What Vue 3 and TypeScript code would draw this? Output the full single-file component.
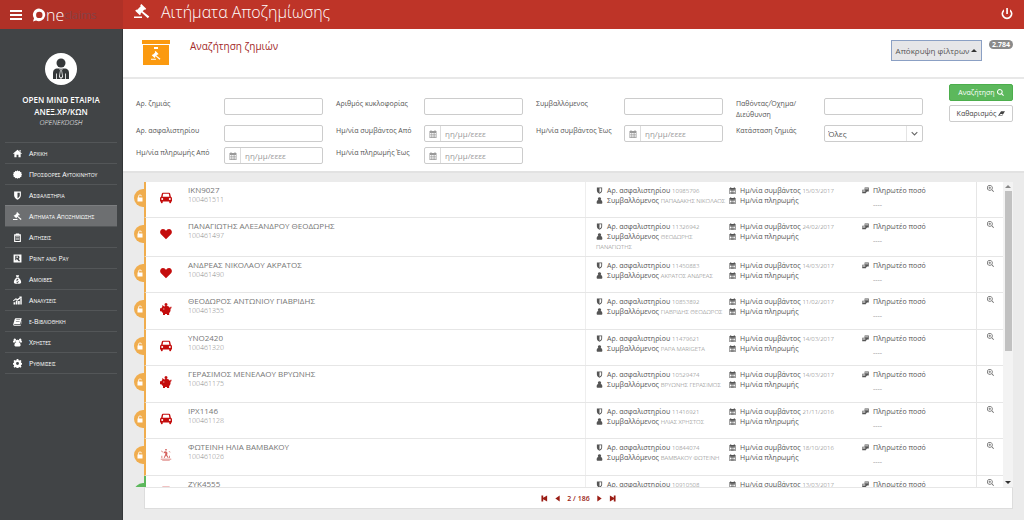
<script setup lang="ts">
import { ref } from 'vue'

interface Glyph { d: string; box: string }
const G: Record<string, Glyph> = {
  home: { box: '0 0 16 16', d: 'M8 1.2 15.8 8l-1 1.1L13.6 8v6.6H9.7v-4.4H6.3v4.4H2.4V8L1.2 9.1.2 8zM11.6 1.6h2v3.6l-2-1.7z' },
  cert: { box: '0 0 16 16', d: 'M8 .6l1.7 1.5 2.2-.6.9 2.1 2.2.6-.1 2.3L16 8l-1.1 1.8.1 2.2-2.2.7-.9 2-2.2-.5L8 15.500l-1.700-1.300-2.200.5-.9-2L1 12l.1-2.200L0 8l1.100-1.500L1 4.200l2.200-.6.9-2.100 2.200.6z' },
  shield: { box: '0 0 16 16', d: 'M2 1h12v7c0 4-4 6.500-6 7.500C6 14.500 2 12 2 8zM8 3v10c2-1.200 4-3 4-5V3z' },
  gavel: { box: '0 0 16 16', d: 'M6.200 1.200 7.400 0l4.800 4.800L11 6l-.6-.5-1.700 1.700 6.600 5.300-1.500 1.700-6.300-5.700-1 1 .5.600-1.200 1.200L1.200 6.700l1.200-1.200.6.5 3.700-3.700zM0 12.500h8V14H0z' },
  clipboard: { box: '0 0 16 16', d: 'M2 2h3V.8h6V2h3v14H2zm2 3v9h8V5zm1 1h6v1.200H5zm0 2.500h6v1.200H5zM5 11h6v1.200H5z' },
  print: { box: '0 0 16 16', d: 'M1 1h14v14H1zm3 2v8h2V8l4 5h2v-2l-2-2.500C12 8 12.500 3 9 3zm2 1.500h3V6.500H6z' },
  bag: { box: '0 0 16 16', d: 'M5 .5h6L9.700 3.500H6.300zM6 4.500h4c2 2 4.500 5 4.500 8 0 2-1 3-3 3h-7c-2 0-3-1-3-3 0-3 2.500-6 4.500-8zm1.400 2v1C5.500 8 5.500 10 7 10.600l2 .6c.5.500 0 1.100-.8 1.100L6 12v1.200l1.400.3v1h1.200v-1c2-.5 2-2.600.2-3.300L7.300 9.600c-.8-.7 0-1.200 2.400-.7V7.800l-1.100-.3v-1z' },
  chart: { box: '0 0 16 16', d: 'M1 11h3v4H1zm4-3h3v7H5zm4 1h3v6H9zm4-4h2.500v10H13zM0 8l5-4 3 1.500L12 2l-1-1h4.500v4.200L14 4 8.500 8 5 6 1 9.500z' },
  book: { box: '0 0 16 16', d: 'M5 2h10.500L12.500 13H2.700c-1 0-1 1 0 1h10.800l2-8 .4 1-2.300 8.500H2.500C.5 15.500 0 14 .7 12L3 4c.4-1.300 1-2 2-2zm1 2.500-.3 1h6.500l.3-1zm-.7 2.500L5 8h6.500l.3-1z' },
  users: { box: '0 0 16 16', d: 'M3 1a2.300 2.300 0 0 1 2 3.600C3.800 6 4.600 7.800 4 7.800H.3C-.5 5 .5 5 1.600 4.800A2.300 2.300 0 0 1 3 1zm10 0a2.300 2.300 0 0 1 1.400 3.800c1 .2 2 .2 1.300 3H12c-.6 0 .2-1.800-1-3.200A2.300 2.300 0 0 1 13 1zM8 3a2.800 2.800 0 0 1 2.300 4.800c2.700.2 3.200 3 3.200 5.200 0 1.300-.8 2-2 2h-7c-1.200 0-2-.7-2-2 0-2.200.5-5 3.200-5.200A2.800 2.800 0 0 1 8 3z' },
  cog: { box: '0 0 16 16', d: 'M6.600 0h2.800l.5 2.200 1.300.6 2-1.200 1.900 1.900-1.200 2 .6 1.300 2.200.4v2.700l-2.200.5-.6 1.300 1.200 2-1.900 1.900-2-1.200-1.300.5-.5 2.200H6.600L6.100 15l-1.300-.6-2 1.200-1.900-1.900 1.200-2-.6-1.300L-.5 9.900V7.200l2-.4.600-1.300-1.200-2 1.900-1.900 2 1.200 1.300-.6zM8 5.500a2.600 2.600 0 1 0 0 5.200 2.600 2.600 0 0 0 0-5.200z' },
  car: { box: '0 0 18 16', d: 'M4.500 0h9c1 0 1.500.6 1.800 1.500l1 4.500c1.200.4 1.700 1.400 1.700 2.700v4.500h-1.300v1.300c0 2-2.800 2-2.800 0v-1.300H4.100v1.300c0 2-2.800 2-2.800 0v-1.300H0V8.700C0 7.400.5 6.400 1.700 6l1-4.500C3 .6 3.500 0 4.500 0zm.3 1.800L3.900 6h10.200l-.9-4.200zM3.300 8a1.500 1.500 0 1 0 0 3 1.500 1.500 0 0 0 0-3zm11.400 0a1.500 1.500 0 1 0 0 3 1.500 1.500 0 0 0 0-3z' },
  heart: { box: '0 0 16 16', d: 'M8 15 1.300 8.300C-1 5.500.3 1.300 4 1.200c2 0 3 1.200 4 2.400 1-1.200 2-2.400 4-2.400 3.700.1 5 4.300 2.700 7.100z' },
  pig: { box: '0 0 16 16', d: 'M8 0a2 2 0 1 1 0 4 2 2 0 0 1 0-4zM3 2.500l2.700 2C8 3.800 11.500 4 13 6.200c.7.200 1-.3.700-1l1.200-.5c.9 1.400.4 2.600-1 2.900.7 2.200-.3 4.400-1.700 5.600V16H9.300v-1.500H6.700V16H4v-2.600c-1-.6-1.700-1.400-2.100-2.400H0V7h1.800c.3-.7.700-1.200 1.200-1.600zM4.500 7.200v1.300h1.200V7.200z' },
  accident: { box: '0 0 16 16', d: 'M7 0h2v2H7zM5 3.500 8 3l2 2-.5 3 2 3.500-1 .5L8 8.500 6 12l-1-.5L7 7V5L5 6zM2 2l2 2-.5.500-2-2zM12 3l2 1-.4.700-2-1zM1 13h14v1H1zm2 2h10v.8H3zM12 9h1v3h-1zM2 9h1v3H2z' },
  lock: { box: '0 0 16 16', d: 'M4.500 7V4.500a3.500 3.500 0 0 1 7 0h-1.700c0-2.400-3.600-2.400-3.600 0V7H13v8H3V7z' },
  user: { box: '0 0 16 16', d: 'M8 .5A3.700 3.700 0 0 1 10.500 7c3.500.2 4 3.500 4 6 0 1.500-1 2.500-2.500 2.500H4C2.500 15.500 1.500 14.500 1.500 13c0-2.500.5-5.800 4-6A3.700 3.700 0 0 1 8 .5z' },
  calendar: { box: '0 0 16 16', d: 'M1 2h2V.5h2V2h6V.5h2V2h2v14H1zm1.200 4v2.200h2.500V6zm3.500 0v2.200h2V6zm3 0v2.200h2V6zm3 0v2.200h2V6zM2.200 9.200v2.200h2.500V9.200zm3.500 0v2.200h2V9.200zm3 0v2.200h2V9.200zm3 0v2.200h2V9.200zM2.200 12.400v2.200h2.500v-2.200zm3.500 0v2.200h2v-2.200zm3 0v2.200h2v-2.200zm3 0v2.200h2v-2.200z' },
  money: { box: '0 0 16 16', d: 'M6 1h9.500v9.500H11v1.700H9V14H.5V6H6zM7 3v1h7V3zm0 2.500v1h7v-1zM1.500 8v1h6V8zm0 2.500v1h6v-1z' },
  zoom: { box: '0 0 16 16', d: 'M6.500 0a6.500 6.500 0 0 1 5.200 10.300l4.300 4.300-1.400 1.400-4.300-4.300A6.500 6.500 0 1 1 6.500 0zm0 1.500a5 5 0 1 0 0 10 5 5 0 0 0 0-10zM5.800 3.500h1.400v2.300h2.300v1.400H7.200v2.300H5.800V7.200H3.500V5.800h2.300z' },
  search: { box: '0 0 16 16', d: 'M6.500 0a6.500 6.500 0 0 1 5.400 10.100l4 4-1.800 1.800-4-4A6.500 6.500 0 1 1 6.500 0zm0 2.300a4.200 4.200 0 1 0 0 8.400 4.200 4.200 0 0 0 0-8.400z' },
  eraser: { box: '0 0 16 16', d: 'M7 3h9l-6.500 10H0zm-1 6-3 3h6l2-3z' },
  power: { box: '0 0 16 16', d: 'M7 0h2.200v8H7zM4 1.500v3a5 5 0 1 0 8 0v-3a7.300 7.300 0 1 1-8 0z' },
  first: { box: '0 0 16 16', d: 'M1 1h4v5.500L14 1v14L5 9.500V15H1z' },
  prev: { box: '0 0 16 16', d: 'M13 1v14L3 8z' },
  next: { box: '0 0 16 16', d: 'M3 1v14l10-7z' },
  last: { box: '0 0 16 16', d: 'M15 1h-4v5.500L2 1v14l9-5.500V15h4z' },
}

const menu = [
  { icon: 'home', text: 'Αρχικη' },
  { icon: 'cert', text: 'Προσφορες Αυτοκινητου' },
  { icon: 'shield', text: 'Ασφαλιστηρια' },
  { icon: 'gavel', text: 'Αιτηματα Αποζημιωσης', active: true },
  { icon: 'clipboard', text: 'Αιτησεις' },
  { icon: 'print', text: 'Print and Pay' },
  { icon: 'bag', text: 'Αμοιβες' },
  { icon: 'chart', text: 'Αναλυσεις' },
  { icon: 'book', text: 'e-Βιβλιοθηκη' },
  { icon: 'users', text: 'Χρηστες' },
  { icon: 'cog', text: 'Ρυθμισεις' },
]

const fields = [
  { id: 'claim', label: 'Αρ. ζημιάς', kind: 'text' },
  { id: 'plate', label: 'Αριθμός κυκλοφορίας', kind: 'text' },
  { id: 'holder', label: 'Συμβαλλόμενος', kind: 'text' },
  { id: 'victim', label: 'Παθόντας/Όχημα/ Διεύθυνση', kind: 'text' },
  { id: 'policy', label: 'Αρ. ασφαλιστηρίου', kind: 'text' },
  { id: 'evfrom', label: 'Ημ/νία συμβάντος Από', kind: 'date' },
  { id: 'evto', label: 'Ημ/νία συμβάντος Έως', kind: 'date' },
  { id: 'status', label: 'Κατάσταση ζημιάς', kind: 'select' },
  { id: 'payfrom', label: 'Ημ/νία πληρωμής Από', kind: 'date' },
  { id: 'payto', label: 'Ημ/νία πληρωμής Έως', kind: 'date' },
]

const claims = [
  { icon: 'car', name: 'ΙΚΝ9027', no: '100461511', policy: '10985796', holder: 'ΠΑΠΑΔΑΚΗΣ ΝΙΚΟΛΑΟΣ', date: '15/03/2017' },
  { icon: 'heart', name: 'ΠΑΝΑΓΙΩΤΗΣ ΑΛΕΞΑΝΔΡΟΥ ΘΕΟΔΩΡΗΣ', no: '100461497', policy: '11326942', holder: 'ΘΕΟΔΩΡΗΣ\nΠΑΝΑΓΙΩΤΗΣ', date: '24/02/2017' },
  { icon: 'heart', name: 'ΑΝΔΡΕΑΣ ΝΙΚΟΛΑΟΥ ΑΚΡΑΤΟΣ', no: '100461490', policy: '11450883', holder: 'ΑΚΡΑΤΟΣ ΑΝΔΡΕΑΣ', date: '14/03/2017' },
  { icon: 'pig', name: 'ΘΕΟΔΩΡΟΣ ΑΝΤΩΝΙΟΥ ΓΙΑΒΡΙΔΗΣ', no: '100461355', policy: '10853892', holder: 'ΓΙΑΒΡΙΔΗΣ ΘΕΟΔΩΡΟΣ', date: '11/02/2017' },
  { icon: 'car', name: 'ΥΝΟ2420', no: '100461320', policy: '11479621', holder: 'PAPA MARIGETA', date: '14/03/2017' },
  { icon: 'pig', name: 'ΓΕΡΑΣΙΜΟΣ ΜΕΝΕΛΑΟΥ ΒΡΥΩΝΗΣ', no: '100461175', policy: '10529474', holder: 'ΒΡΥΩΝΗΣ ΓΕΡΑΣΙΜΟΣ', date: '14/03/2017' },
  { icon: 'car', name: 'ΙΡΧ1146', no: '100461128', policy: '11416921', holder: 'ΗΛΙΑΣ ΧΡΗΣΤΟΣ', date: '21/11/2016' },
  { icon: 'accident', name: 'ΦΩΤΕΙΝΗ ΗΛΙΑ ΒΑΜΒΑΚΟΥ', no: '100461026', policy: '10844074', holder: 'ΒΑΜΒΑΚΟΥ ΦΩΤΕΙΝΗ', date: '18/10/2016' },
  { icon: 'car', name: 'ΖΥΚ4555', no: '', policy: '10910508', holder: '', date: '13/03/2017', open: true },
]

const values = ref<Record<string, string>>({})
const status = ref('all')
</script>

<template>
  <div class="page">
    <aside class="side">
      <div class="brand">
        <button class="plain burger" aria-label="Μενού"><span /><span /><span /></button>
        <a class="logo" href="#">
          <svg class="mark" viewBox="0 0 14 14"><path d="M7 .5a6.300 6.300 0 1 1-3 11.900L1 13.500l1-3.200A6.300 6.300 0 0 1 7 .5zm.3 3.200a3.200 3.200 0 1 0 0 6.400 3.200 3.200 0 0 0 0-6.400z" fill-rule="evenodd" /></svg>
          <span class="one">ne</span><span class="sub">claims</span>
        </a>
      </div>
      <div class="profile">
        <svg class="avatar" viewBox="0 0 32 32">
          <circle cx="16" cy="16" r="16" fill="#fff" />
          <circle cx="16" cy="10" r="4.500" fill="#35383a" />
          <path d="M13 15.500h6c4 0 5 2 5 5V26H8v-5.500c0-3 1-5 5-5z" fill="#35383a" />
          <path d="M14.300 15.500h3.400l-.7 2 1 6.500-2 2-2-2 1-6.500zM11 20.500h.8V26H11zm9.200 0h.8V26h-.8z" fill="#fff" />
          <path d="M15.300 16h1.400l-.3 1.600.7 6-1.100 1.200-1.100-1.200.7-6z" fill="#35383a" />
        </svg>
        <strong>OPEN MIND ΕΤΑΙΡΙΑ ΑΝΕΞ.ΧΡ/ΚΩΝ</strong>
        <em>OPENEKDOSH</em>
      </div>
      <nav>
        <a v-for="m in menu" :key="m.text" href="#" :class="{ active: m.active }">
          <svg :viewBox="G[m.icon].box"><path :d="G[m.icon].d" fill-rule="evenodd" /></svg>
          <span>{{ m.text }}</span>
        </a>
      </nav>
    </aside>

    <div class="main">
      <header class="top">
        <svg class="gavel" :viewBox="G.gavel.box"><path :d="G.gavel.d" /></svg>
        <h1>Αιτήματα Αποζημίωσης</h1>
        <button class="plain power" aria-label="Έξοδος"><svg :viewBox="G.power.box"><path :d="G.power.d" /></svg></button>
      </header>

      <section class="heading">
        <svg class="box" viewBox="0 0 28 26">
          <path d="M0 0h28v4H0zM1 5h26v20H1z" fill="#fb9a10" />
          <path d="M12 7h4v2h-4z" fill="#fff" />
          <g transform="translate(9 11) scale(.62)" fill="#fff"><path :d="G.gavel.d" /></g>
        </svg>
        <h2>Αναζήτηση ζημιών</h2>
        <button class="toggle">Απόκρυψη φίλτρων <i /></button>
        <span class="badge">2.784</span>
      </section>

      <form class="filters" @submit.prevent>
        <div class="grid">
          <div v-for="f in fields" :key="f.id" class="field">
            <label :for="f.id">{{ f.label }}</label>
            <div v-if="f.kind === 'date'" class="control">
              <span class="addon"><svg :viewBox="G.calendar.box"><path :d="G.calendar.d" fill-rule="evenodd" /></svg></span>
              <input :id="f.id" v-model="values[f.id]" type="text" placeholder="ηη/μμ/εεεε">
            </div>
            <div v-else-if="f.kind === 'select'" class="control">
              <select :id="f.id" v-model="status"><option value="all">Όλες</option></select>
              <span class="chevron"><svg viewBox="0 0 10 6"><path d="M1 1l4 4 4-4" fill="none" stroke="#666" stroke-width="1.500" /></svg></span>
            </div>
            <div v-else class="control"><input :id="f.id" v-model="values[f.id]" type="text"></div>
          </div>
        </div>
        <div class="actions">
          <button class="go" type="submit">Αναζήτηση <svg :viewBox="G.search.box"><path :d="G.search.d" fill-rule="evenodd" /></svg></button>
          <button class="clear" type="reset">Καθαρισμός <svg :viewBox="G.eraser.box"><path :d="G.eraser.d" fill-rule="evenodd" /></svg></button>
        </div>
      </form>

      <section class="results">
        <div class="viewport">
          <ul class="list">
            <li v-for="c in claims" :key="c.policy">
              <span class="tab" :class="{ open: c.open }"><svg :viewBox="G.lock.box"><path :d="G.lock.d" /></svg></span>
              <div class="row" :class="{ open: c.open }">
                <svg class="kind" :class="c.icon" :viewBox="G[c.icon].box"><path :d="G[c.icon].d" fill-rule="evenodd" /></svg>
                <div class="who"><b>{{ c.name }}</b><small v-if="c.no">{{ c.no }}</small></div>
                <div class="info policy">
                  <p><svg :viewBox="G.shield.box"><path :d="G.shield.d" fill-rule="evenodd" /></svg>Αρ. ασφαλιστηρίου <span>{{ c.policy }}</span></p>
                  <p v-if="c.holder"><svg :viewBox="G.user.box"><path :d="G.user.d" /></svg>Συμβαλλόμενος <span>{{ c.holder }}</span></p>
                </div>
                <div class="info dates">
                  <p><svg :viewBox="G.calendar.box"><path :d="G.calendar.d" fill-rule="evenodd" /></svg>Ημ/νία συμβάντος <span>{{ c.date }}</span></p>
                  <p v-if="c.holder"><svg :viewBox="G.calendar.box"><path :d="G.calendar.d" fill-rule="evenodd" /></svg>Ημ/νία πληρωμής</p>
                </div>
                <div class="info amount">
                  <p><svg :viewBox="G.money.box"><path :d="G.money.d" fill-rule="evenodd" /></svg>Πληρωτέο ποσό</p>
                  <p v-if="c.holder" class="dash">----</p>
                </div>
                <button class="plain view" aria-label="Προβολή"><svg :viewBox="G.zoom.box"><path :d="G.zoom.d" fill-rule="evenodd" /></svg></button>
              </div>
            </li>
          </ul>
          <div class="bar"><i class="up" /><div class="track"><div class="thumb" /></div><i class="down" /></div>
        </div>
        <footer class="pager">
          <button class="plain" aria-label="Πρώτη"><svg :viewBox="G.first.box"><path :d="G.first.d" /></svg></button>
          <button class="plain" aria-label="Προηγούμενη"><svg :viewBox="G.prev.box"><path :d="G.prev.d" /></svg></button>
          <span>2 / 186</span>
          <button class="plain" aria-label="Επόμενη"><svg :viewBox="G.next.box"><path :d="G.next.d" /></svg></button>
          <button class="plain" aria-label="Τελευταία"><svg :viewBox="G.last.box"><path :d="G.last.d" /></svg></button>
        </footer>
      </section>
    </div>
  </div>
</template>

<style>
body { margin: 0; }
</style>

<style scoped>
* { box-sizing: border-box; }
.page { display: flex; height: 100vh; background: #ebebeb; font-family: "Open Sans", "Noto Sans", sans-serif; font-size: 7px; color: #555; }
h1, h2, p, ul { margin: 0; padding: 0; }
svg { fill: currentColor; flex: none; }
button, input, select { font: inherit; color: inherit; margin: 0; }
.plain { border: 0; background: none; padding: 0; display: flex; cursor: pointer; }

.side { width: 123px; flex: none; display: flex; flex-direction: column; background: #414446; color: #fff; border-right: 1px solid #333638; }
.brand { height: 29px; flex: none; display: flex; align-items: center; gap: 10px; padding-left: 10px; background: #b03127; margin-right: -1px; }
.burger { flex-direction: column; gap: 2px; width: 12px; }
.burger span { height: 2px; width: 12px; background: #fff; }
.logo { display: flex; align-items: center; color: #fff; text-decoration: none; }
.mark { width: 14px; height: 14px; }
.one { font-size: 16px; line-height: 16px; font-weight: 300; }
.sub { font-size: 11px; line-height: 16px; color: #854247; }
.profile { padding: 24px 10px 15px; display: flex; flex-direction: column; align-items: center; text-align: center; }
.avatar { width: 32px; height: 32px; }
.profile strong { margin-top: 9px; font-size: 8px; line-height: 12px; font-weight: 600; }
.profile em { font-size: 7px; line-height: 9px; font-weight: 300; }
nav { padding: 0 5px; display: flex; flex-direction: column; }
nav a { height: 21px; display: flex; align-items: center; gap: 7px; padding-left: 8px; border-top: 1px solid #535658; color: #fff; text-decoration: none; font-size: 7px; font-variant: small-caps; }
nav a:last-child { border-bottom: 1px solid #535658; height: 22px; }
nav a.active { background: #6d6f71; border-color: #7c7e80; }
nav svg { width: 9px; height: 9px; }

.main { flex: 1; min-width: 0; display: flex; flex-direction: column; }
.top { height: 29px; flex: none; display: flex; align-items: center; padding: 0 11px 5px; background: #be3428; color: #fff; }
.gavel { width: 16px; height: 16px; }
h1 { flex: 1; margin-left: 11px; font-size: 16px; line-height: 22px; font-weight: 300; }
.power svg { width: 12px; height: 12px; margin-top: 4px; }

.heading { height: 50px; flex: none; display: flex; align-items: flex-start; padding: 11px 11px 0 19px; background: #fff; border-bottom: 2px solid #e8e8e8; }
.box { width: 28px; height: 26px; }
h2 { flex: 1; margin-left: 20px; font-size: 10px; line-height: 13px; font-weight: 400; color: #a32a2a; }
.toggle { height: 21px; width: 91px; padding: 0; border: 1px solid #8ba0c4; background: #e6e6e8; font-size: 8px; display: flex; align-items: center; justify-content: center; gap: 2px; }
.toggle i, .up, .down { width: 0; height: 0; border: 3px solid transparent; }
.toggle i, .up { border-top: 0; border-bottom-color: #333; }
.badge { margin-left: 7px; width: 24px; height: 9px; border-radius: 5px; background: #8a8a8a; color: #fff; font-size: 7px; line-height: 9px; font-weight: 700; text-align: center; }

.filters { flex: none; display: flex; gap: 26px; padding: 5px 11px 7px 13px; background: #fff; }
.grid { flex: 1; min-width: 0; padding-top: 14px; display: grid; grid-template-columns: repeat(4, minmax(0, 1fr)); column-gap: 13px; row-gap: 5px; }
.field { display: flex; align-items: flex-start; min-width: 0; }
.field label { width: 88px; flex: none; padding-right: 10px; line-height: 11px; font-size: 7px; }
.control { flex: 1; min-width: 0; height: 17px; display: flex; border: 1px solid #ccc; border-radius: 2px; background: #fff; }
.control input, .control select { flex: 1; width: 100%; min-width: 0; border: 0; background: none; padding: 0 4px; outline: 0; font-size: 8px; appearance: none; }
.control select { padding: 0 3px; }
.control input::placeholder { color: #999; opacity: 1; }
.addon { width: 16px; flex: none; display: flex; align-items: center; justify-content: center; border-right: 1px solid #ddd; color: #999; }
.addon svg { width: 8px; height: 8px; }
.chevron { width: 16px; flex: none; display: flex; align-items: center; justify-content: center; border-left: 1px solid #e4e4e4; }
.chevron svg { width: 7px; height: 5px; }
.actions { width: 64px; flex: none; display: flex; flex-direction: column; gap: 4px; }
.actions button { height: 17px; padding: 0; border: 1px solid #ccc; border-radius: 2px; background: #fff; display: flex; align-items: center; justify-content: center; gap: 2px; color: #444; }
.actions .go { background: #5cb85c; border-color: #4cae4c; color: #fff; }
.actions svg { width: 7px; height: 7px; }

.results { flex: 1; min-height: 0; display: flex; flex-direction: column; padding: 9px 11px 11px; border-top: 2px solid #e2e2e2; }
.viewport { flex: 1; min-height: 0; display: flex; overflow: hidden; }
.list { flex: 1; min-width: 0; list-style: none; }
.list li { display: flex; min-height: 36px; }
.list li:nth-child(even) { min-height: 37px; }
.tab { width: 10px; height: 18px; margin-top: 7px; flex: none; border-radius: 9px 0 0 9px; background: #f0ad4e; color: #fff; display: flex; align-items: center; justify-content: flex-end; }
.tab.open { background: #5cb85c; }
.tab svg { width: 8px; height: 8px; }
.row { flex: 1; min-width: 0; display: flex; background: #fff; border-left: 2px solid #f0ad4e; border-bottom: 1px solid #e6e6e6; }
.row.open { border-left-color: #5cb85c; }
.kind { width: 12px; height: 12px; margin: 10px 16px 0 14px; color: #c40d0d; }
.kind.accident { color: #d4605c; }
.who { flex: 1; min-width: 0; padding-top: 3px; display: flex; flex-direction: column; }
.who b { font-size: 8px; line-height: 10px; font-weight: 400; color: #777; }
.who small { font-size: 7px; line-height: 10px; color: #888; font-weight: 300; }
.info { padding-top: 4px; padding-bottom: 4px; color: #555; }
.info p { line-height: 10px; font-size: 7px; }
.info p span { font-size: 6px; color: #777; font-weight: 300; white-space: pre-line; }
.info svg { width: 7px; height: 7px; margin-right: 4px; vertical-align: -1px; }
.policy { width: 144px; border-left: 1px solid #eee; padding-left: 10px; }
.dates { width: 133px; }
.amount { width: 114px; }
.amount .dash { margin: 4px 0 0 11px; color: #999; }
.view { width: 27px; padding-top: 3px; justify-content: center; border-left: 1px solid #e6e6e6; color: #666; }
.view svg { width: 7px; height: 7px; }
.bar { width: 10px; display: flex; flex-direction: column; align-items: center; background: #f3f3f3; padding: 3px 0; }
.up { border-bottom-color: #888; }
.down { border-bottom: 0; border-top-color: #333; }
.track { flex: 1; width: 7px; padding-top: 3px; }
.thumb { height: 55%; background: #c1c1c1; }
.pager { height: 22px; flex: none; margin-left: 10px; display: flex; align-items: center; justify-content: center; gap: 6px; background: #fff; border: 1px solid #ddd; border-top-color: #e6e6e6; color: #9a1c14; font-size: 7px; font-weight: 600; }
.pager svg { width: 7px; height: 7px; }
</style>
